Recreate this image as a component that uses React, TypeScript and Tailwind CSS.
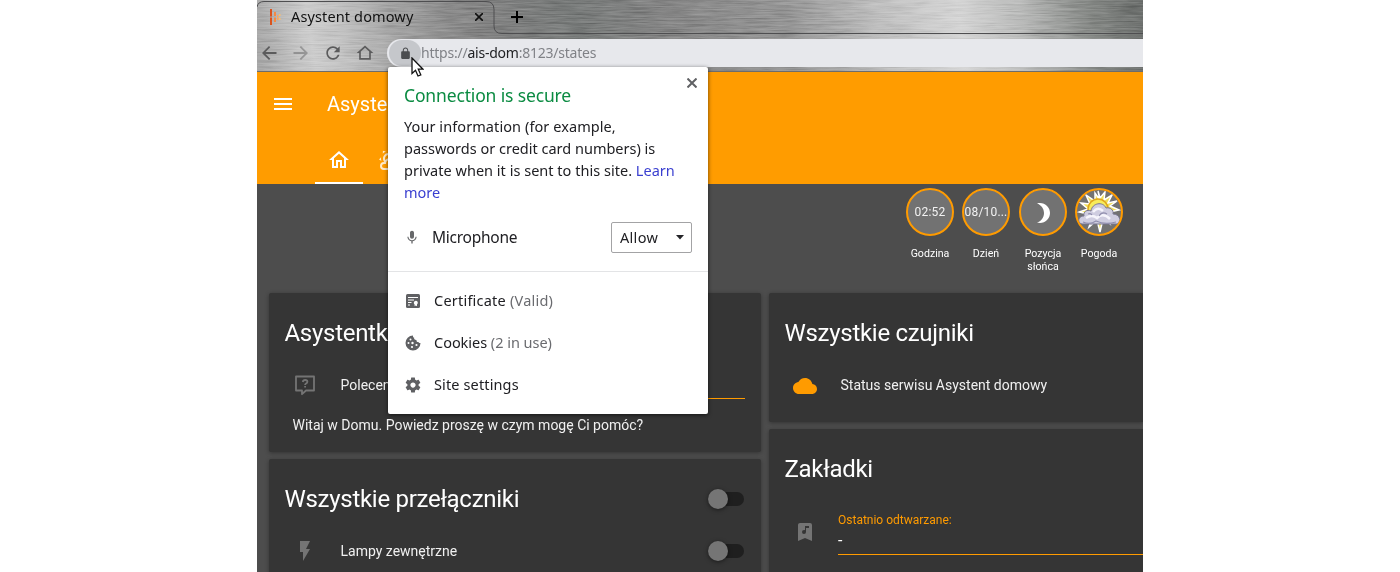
import type { ReactNode } from "react";

const ui = "font-['Noto_Sans',sans-serif]";

function Icon({ d, className }: { d: string; className: string }) {
  return (
    <svg viewBox="0 0 24 24" className={className} fill="currentColor" fillRule="evenodd">
      <path d={d} />
    </svg>
  );
}

const paths = {
  back: "M21 10.800H7.83l5.59-5.59L12 3.600l-8.400 8.400L12 20.400l1.600-1.600L7.83 13.200H21v-2.400z",
  forward: "M12 3.600l-1.600 1.600 5.770 5.600H3v2.400h13.170l-5.770 5.600 1.600 1.600 8.400-8.400z",
  reload:
    "M17.65 6.35C16.2 4.9 14.21 4 12 4c-4.42 0-7.99 3.58-7.99 8s3.57 8 7.99 8c3.73 0 6.84-2.55 7.73-6h-2.08c-.82 2.33-3.04 4-5.65 4-3.31 0-6-2.69-6-6s2.69-6 6-6c1.66 0 3.14.69 4.22 1.78L13 11h7V4l-2.35 2.35z",
  homeOutline: "M12 3L2 12h3v8h14v-8h3L12 3zm5 15H7v-7.81l5-4.5 5 4.5V18z",
  lock: "M18 8h-1V6c0-2.76-2.24-5-5-5S7 3.24 7 6v2H6c-1.1 0-2 .9-2 2v10c0 1.1.9 2 2 2h12c1.1 0 2-.9 2-2V10c0-1.1-.9-2-2-2zM8.9 8V6c0-1.71 1.39-3.1 3.1-3.1s3.1 1.39 3.1 3.1v2H8.9z",
  menu: "M3 18h18v-2H3v2zm0-5h18v-2H3v2zm0-7v2h18V6H3z",
  home: "M12 5.69l5 4.5V18h-2v-6H9v6H7v-7.81l5-4.5M12 3L2 12h3v8h6v-6h2v6h6v-8h3L12 3z",
  weather:
    "M12.74,5.47C15.1,6.5 16.35,9.03 15.92,11.46C17.19,12.56 18,14.19 18,16V16.17C18.31,16.06 18.65,16 19,16A3,3 0 0,1 22,19A3,3 0 0,1 19,22H6A4,4 0 0,1 2,18A4,4 0 0,1 6,14H6.27C5,12.45 4.6,10.24 5.5,8.26C6.72,5.5 9.97,4.24 12.74,5.47M11.93,7.3C10.16,6.5 8.09,7.31 7.31,9.07C6.85,10.09 6.93,11.22 7.41,12.13C8.5,10.83 10.16,10 12,10C12.7,10 13.38,10.12 14,10.34C13.94,9.06 13.18,7.86 11.93,7.3M13.55,3.64C13,3.4 12.45,3.23 11.88,3.12L14.37,1.82L15.27,4.71C14.76,4.29 14.19,3.93 13.55,3.64M6.09,4.44C5.6,4.79 5.17,5.19 4.8,5.63L4.91,2.82L7.87,3.5C7.25,3.71 6.65,4.03 6.09,4.44M3.04,11.3C3.11,11.9 3.24,12.47 3.43,13L1.06,11.5L3.1,9.28C3,9.93 2.97,10.61 3.04,11.3M19,18H16V16A4,4 0 0,0 12,12A4,4 0 0,0 8,16H6A2,2 0 0,0 4,18A2,2 0 0,0 6,20H19A1,1 0 0,0 20,19A1,1 0 0,0 19,18Z",
  moon: "M9 2c-1.05 0-2.05.16-3 .46 4.06 1.27 7 5.06 7 9.54 0 4.48-2.94 8.27-7 9.54.95.3 1.95.46 3 .46 5.52 0 10-4.48 10-10S14.52 2 9 2z",
  flash: "M7,2V13H10V22L17,10H13L17,2H7Z",
  cloud:
    "M19.35 10.04C18.67 6.59 15.64 4 12 4 9.11 4 6.6 5.64 5.35 8.04 2.34 8.36 0 10.91 0 14c0 3.31 2.69 6 6 6h13c2.76 0 5-2.24 5-5 0-2.64-2.05-4.78-4.65-4.96z",
  bookmark:
    "M17,3A2,2 0 0,1 19,5V21L12,18L5,21V5C5,3.89 5.9,3 7,3H17M11,14A2,2 0 0,0 13,12V8H16V6H12V10.27C11.71,10.1 11.36,10 11,10A2,2 0 0,0 9,12A2,2 0 0,0 11,14Z",
  mic: "M12 14c1.66 0 2.99-1.34 2.99-3L15 5c0-1.66-1.34-3-3-3S9 3.34 9 5v6c0 1.66 1.34 3 3 3zm5.3-3c0 3-2.54 5.1-5.3 5.1S6.7 14 6.7 11H5c0 3.41 2.72 6.23 6 6.72V21h2v-3.28c3.28-.48 6-3.3 6-6.72h-1.7z",
  gear: "M19.43 12.98c.04-.32.07-.64.07-.98s-.03-.66-.07-.98l2.11-1.65c.19-.15.24-.42.12-.64l-2-3.46c-.12-.22-.39-.3-.61-.22l-2.49 1c-.52-.4-1.08-.73-1.69-.98l-.38-2.65C14.46 2.18 14.25 2 14 2h-4c-.25 0-.46.18-.49.42l-.38 2.65c-.61.25-1.17.59-1.69.98l-2.49-1c-.23-.09-.49 0-.61.22l-2 3.46c-.13.22-.07.49.12.64l2.11 1.65c-.04.32-.07.65-.07.98s.03.66.07.98l-2.11 1.65c-.19.15-.24.42-.12.64l2 3.46c.12.22.39.3.61.22l2.49-1c.52.4 1.08.73 1.69.98l.38 2.65c.03.24.24.42.49.42h4c.25 0 .46-.18.49-.42l.38-2.65c.61-.25 1.17-.59 1.69-.98l2.49 1c.23.09.49 0 .61-.22l2-3.46c.12-.22.07-.49-.12-.64l-2.11-1.65zM12 15.5c-1.93 0-3.5-1.57-3.5-3.5s1.57-3.5 3.5-3.5 3.5 1.57 3.5 3.5-1.57 3.5-3.5 3.5z",
};

function Metal() {
  return (
    <svg className="absolute inset-0 h-full w-full" preserveAspectRatio="none">
      <defs>
        <linearGradient id="steel" gradientUnits="userSpaceOnUse" x1="0" y1="36" x2="870" y2="-104">
          <stop offset="0" stopColor="#a8a8a8" />
          <stop offset="0.06" stopColor="#cccccc" />
          <stop offset="0.1" stopColor="#c0c0c0" />
          <stop offset="0.17" stopColor="#9c9c9c" />
          <stop offset="0.25" stopColor="#828282" />
          <stop offset="0.36" stopColor="#777a79" />
          <stop offset="0.46" stopColor="#848484" />
          <stop offset="0.6" stopColor="#969696" />
          <stop offset="0.7" stopColor="#bebebe" />
          <stop offset="0.79" stopColor="#d4d4d4" />
          <stop offset="0.86" stopColor="#b8b9b8" />
          <stop offset="0.94" stopColor="#838683" />
          <stop offset="1" stopColor="#6b6e6c" />
        </linearGradient>
        <filter id="brushed" x="0" y="0" width="100%" height="100%" colorInterpolationFilters="sRGB">
          <feTurbulence type="fractalNoise" baseFrequency="0.035 0.65" numOctaves="3" seed="8" />
          <feColorMatrix type="matrix" values="1.200 0 0 0 -0.080  1.200 0 0 0 -0.080  1.200 0 0 0 -0.080  0 0 0 0 1" />
        </filter>
      </defs>
      <rect width="886" height="72" fill="url(#steel)" />
      <rect width="886" height="72" filter="url(#brushed)" opacity="0.38" className="mix-blend-soft-light" />
      <path d="M0 7Q1 1.5 7 1.5H229Q237 1.5 237 9.500V26Q237 33.500 245 33.500H886" fill="none" stroke="#4e4e50" />
      <path d="M0 71.500H886" stroke="#6c6c6c" />
    </svg>
  );
}

function Logo() {
  return (
    <svg viewBox="0 0 12 16" className="ml-3 h-4 w-3 shrink-0">
      <path d="M1 0h2v7.500H1zM1 8.500h2V16H1z" fill="#d9531e" />
      <path d="M5 3h2v4H5zM5 8.500h2V13H5z" fill="#f58a45" />
      <path d="M8 6h1.500v5H8z" fill="#fba65e" />
      <path d="M10 5h1.500v2H10zM10 9h1.500v2H10z" fill="#fcbd6f" />
    </svg>
  );
}

function Browser() {
  return (
    <div className="relative h-[72px] shrink-0">
      <Metal />
      <div className={`relative flex h-[72px] flex-col text-[15px] text-[#111] ${ui}`}>
        <div className="flex h-[34px] items-center">
          <Logo />
          <span className="ml-[10px] w-[123px] whitespace-nowrap text-[14.500px] tracking-[0.13px]">Asystent domowy</span>
          <svg viewBox="0 0 8 8" className="ml-[61px] h-2 w-2" stroke="#111" strokeWidth="1.600">
            <path d="M0 0l8 8M8 0L0 8" />
          </svg>
          <svg viewBox="0 0 12 12" className="ml-7 h-3 w-3" stroke="#000" strokeWidth="2">
            <path d="M6 0v12M0 6h12" />
          </svg>
        </div>
        <div className="flex h-[38px] pt-[5px] text-[#5b5b5c]">
          <div className="flex h-[27px] w-[130px] items-center gap-[12px] pl-[2px]">
            <Icon d={paths.back} className="h-5 w-5" />
            <Icon d={paths.forward} className="h-5 w-5 opacity-45" />
            <Icon d={paths.reload} className="h-5 w-5" />
            <Icon d={paths.homeOutline} className="h-5 w-5" />
          </div>
          <div className="flex h-7 flex-1 items-center rounded-l-full bg-[#e7e8ec] pl-[2px]">
            <div className="flex h-[26px] w-8 items-center justify-center rounded-full bg-[#c5c7cb] pr-0">
              <Icon d={paths.lock} className="h-[13px] w-[13px] text-[#4b4d50]" />
            </div>
            <span className="-mt-[2px] whitespace-nowrap text-[14px] tracking-[-0.230px] text-[#808287]">
              https://<span className="text-[#202124]">ais-dom</span>:8123/states
            </span>
          </div>
        </div>
      </div>
    </div>
  );
}

function Sun() {
  return (
    <svg viewBox="0 0 44 44" className="h-11 w-11 shrink-0">
      <path
        d="M21 1l2 7 5-6-1 8 8-5-4 8 9-2-7 5 9 4-9 2 8 7-10-2 2 7-7-5-3 13-3-12-8 7 3-9-12 3 8-7-9-2 9-3-7-6 9 1-4-9 9 6 0-8 5 7z"
        fill="#f0df5a"
        stroke="#fff"
        strokeWidth="1.500"
      />
      <circle cx="21" cy="19" r="10" fill="#f8ec5a" stroke="#e0a51c" strokeWidth="1.500" />
      <path
        d="M5 34c-5-1-4-8 2-8-1-4 3-7 7-5 1-8 12-10 15-3 4-1 8 2 7 6 7 0 9 8 4 10z"
        fill="#cfcde0"
        stroke="#77758f"
      />
      <path d="M9 28q6-4 11 0q6-6 13 1M16 22q5-6 10-1" fill="none" stroke="#f6f5fc" strokeWidth="2.500" />
      <path d="M6 32q7 3 13-1q9 4 20 1M22 26q3-5 8-2M11 24q3-1 4 1" fill="none" stroke="#918fae" strokeWidth="1.200" />
    </svg>
  );
}

function Badge({ label, width, children }: { label: string; width: string; children: ReactNode }) {
  return (
    <div className={`flex flex-col items-center ${width}`}>
      <div className="flex h-12 w-12 items-center justify-center overflow-hidden rounded-full border-[2px] border-[#ff9b00] bg-[#727272] text-[12px] tracking-[0.180px] text-[#f2f2f2]">
        {children}
      </div>
      <div className="mt-[11px] w-12 text-center text-[10.600px] leading-[13px] text-white">{label}</div>
    </div>
  );
}

function Card({ title, className, action, children }: { title: string; className: string; action?: ReactNode; children: ReactNode }) {
  return (
    <section className={`flex flex-col rounded-[2px] bg-[#353535] shadow-[0_1px_4px_rgba(0,0,0,0.35)] ${className}`}>
      <div className="flex h-20 shrink-0 items-center justify-between pr-[17px] pl-[15.500px] text-[24px] tracking-[-0.288px] text-white">
        {title}
        {action}
      </div>
      {children}
    </section>
  );
}

function Toggle() {
  return (
    <span className="flex h-5 w-9 items-center">
      <span className="flex h-[14px] w-9 items-center rounded-full bg-[#1f1f1f]">
        <span className="h-5 w-5 rounded-full bg-[#757575] shadow-[0_1px_4px_rgba(0,0,0,0.5)]" />
      </span>
    </span>
  );
}

function Row({ icon, label, children }: { icon: ReactNode; label: string; children?: ReactNode }) {
  return (
    <div className="flex h-6 items-center pr-[17px] pl-6 text-[14px] text-[#f0f0f0]">
      <span className="w-6">{icon}</span>
      <span className="ml-[23.500px] flex-1 whitespace-nowrap">{label}</span>
      {children}
    </div>
  );
}

function Popup() {
  return (
    <div className={`absolute top-[67px] left-[131px] flex h-[347px] w-[320px] flex-col rounded-[2px] bg-white text-[15px] text-[#202024] shadow-[0_1px_4px_rgba(0,0,0,0.6)] ${ui}`}>
      <div className="flex h-[205px] shrink-0 flex-col border-b border-[#e3e4e6] pr-4 pl-4">
        <div className="flex h-[48px] justify-between whitespace-nowrap">
          <h1 className="mt-4 text-[17.500px] leading-[24px] tracking-[-0.150px] text-[#0b8b42]">Connection is secure</h1>
          <svg viewBox="0 0 10 10" className="mt-[11px] -mr-[5px] h-[10px] w-[10px]" stroke="#606164" strokeWidth="2">
            <path d="M0.500 0.500l9 9M9.500 0.500l-9 9" />
          </svg>
        </div>
        <div className="flex flex-col items-start whitespace-nowrap text-[14.500px] leading-[22px]">
          <span className="tracking-[0.080px]">Your information (for example,</span>
          <span>passwords or credit card numbers) is</span>
          <span className="tracking-[0.020px]">private when it is sent to this site. <span className="text-[#3a3fd0]">Learn</span></span>
          <span className="text-[#3a3fd0]">more</span>
        </div>
        <div className="mt-[19px] flex h-[31px] items-center">
          <Icon d={paths.mic} className="h-[17px] w-4 text-[#67686a]" />
          <span className="ml-3 flex-1 text-[15.500px] tracking-[-0.250px]">Microphone</span>
          <div className="flex h-[31px] w-[81px] items-center justify-between rounded-[2px] border border-[#a3a3a5] pr-[7px] pl-2 text-[14.500px] tracking-[0.300px]">
            Allow
            <svg viewBox="0 0 8 5" className="h-[5px] w-2" fill="#242428">
              <path d="M0 0h8L4 4.500z" />
            </svg>
          </div>
        </div>
      </div>
      <div className="flex flex-col pt-2 text-[14.500px]">
        <PopupRow
          icon={
            <svg viewBox="0 0 14 14" className="h-[14px] w-[14px]">
              <rect width="14" height="14" rx="1.500" fill="#5f6063" />
              <path d="M2 3.500h10M2 6h6M2 8.500h3.500M2 11h2" stroke="#fff" strokeWidth="1" />
              <path d="M9.700 6.800a2 2 0 011.300 3.600v1.900l-1.200-.8-1.200.8v-1.900a2 2 0 011.100-3.600z" fill="#fff" />
            </svg>
          }
          label="Certificate"
          note="(Valid)"
          tracking="tracking-[0.220px]"
        />
        <PopupRow
          icon={
            <svg viewBox="0 0 16 16" className="h-4 w-4">
              <path d="M8 .5a7.500 7.500 0 107.500 7.500c-1 .3-1.800-.2-2-1.100-1.400.2-2.300-.7-2-2C9.700 5 8.700 4 9.200 2.700 8.200 2.500 7.800 1.500 8 .5z" fill="#5f6063" />
              <g fill="#fff">
                <circle cx="5.500" cy="4.500" r="1" />
                <circle cx="3.500" cy="8" r="1" />
                <circle cx="7.500" cy="8" r="1.200" />
                <circle cx="7" cy="12" r="1.100" />
                <circle cx="11.500" cy="10" r="1.100" />
              </g>
            </svg>
          }
          label="Cookies"
          note="(2 in use)"
          tracking="tracking-[-0.030px]"
        />
        <PopupRow
          icon={<Icon d={paths.gear} className="h-[18px] w-[18px] text-[#5f6063]" />}
          label="Site settings"
          tracking="tracking-[0.130px]"
        />
      </div>
    </div>
  );
}

function PopupRow({ icon, label, note, tracking }: { icon: ReactNode; label: string; note?: string; tracking: string }) {
  return (
    <div className="flex h-[42px] items-center pl-4">
      <span className="flex w-[18px] justify-center">{icon}</span>
      <span className={`ml-3 whitespace-pre ${tracking}`}>
        {label} <span className="text-[#6a6b6f]">{note}</span>
      </span>
    </div>
  );
}

export default function App() {
  return (
    <div className="h-[572px] overflow-hidden bg-white font-[Roboto,sans-serif]">
      <main className="relative mx-auto flex h-[572px] w-[886px] flex-col overflow-hidden bg-[#4d4d4d]">
        <Browser />
        <header className="h-[112px] shrink-0 bg-[#ff9c00] text-white">
          <div className="flex h-16 items-center pl-[14px] text-[20px]">
            <Icon d={paths.menu} className="h-6 w-6" />
            <span className="ml-8">Asyste</span>
          </div>
          <nav className="flex h-12 pl-[58px]">
            <span className="flex w-12 items-center justify-center border-b-2 border-white pt-[2px]">
              <Icon d={paths.home} className="h-6 w-6" />
            </span>
            <span className="flex w-12 items-center justify-center pl-1.5 opacity-80">
              <Icon d={paths.weather} className="h-6 w-6" />
            </span>
          </nav>
        </header>
        <div className="flex h-[109px] shrink-0 justify-end pt-1 pr-[17px]">
          <Badge label="Godzina" width="w-14">02:52</Badge>
          <Badge label="Dzień" width="w-14">08/10...</Badge>
          <Badge label="Pozycja słońca" width="w-[58px]"><Icon d={paths.moon} className="mt-[2px] h-6 w-6 shrink-0 text-white" /></Badge>
          <Badge label="Pogoda" width="w-[54px]"><Sun /></Badge>
        </div>
        <div className="flex gap-2 pl-3">
          <div className="flex w-[492px] shrink-0 flex-col gap-[7px]">
            <Card title="Asystentk" className="h-[159px]">
              <div className="flex h-[26px] shrink-0 items-start">
                <Row
                  icon={
                    <svg viewBox="0 0 24 24" className="h-6 w-6" fill="none" stroke="#747474" strokeWidth="1.800">
                      <path d="M3 3.500h18v14h-8l-4 3.700v-3.700H3z" strokeLinejoin="round" />
                      <path d="M9.800 9q.3-2 2.400-2 2.200 0 2.200 1.800 0 1-1.300 1.700-1 .6-1 1.500M12.100 13v1.500" />
                    </svg>
                  }
                  label="Polecen"
                />
                <div className="mr-4 h-[26px] flex-1 border-b border-[#ff9b00]" />
              </div>
              <p className="mt-[17px] ml-[23.500px] text-[14px] leading-[18px] text-[#f0f0f0]">
                Witaj w Domu. Powiedz proszę w czym mogę Ci pomóc?
              </p>
            </Card>
            <Card title="Wszystkie przełączniki" className="h-[180px]" action={<Toggle />}>
              <Row icon={<Icon d={paths.flash} className="h-6 w-6 text-[#747474]" />} label="Lampy zewnętrzne">
                <Toggle />
              </Row>
            </Card>
          </div>
          <div className="flex flex-1 flex-col gap-[7px]">
            <Card title="Wszystkie czujniki" className="h-[129px] rounded-r-none">
              <Row icon={<Icon d={paths.cloud} className="mt-px h-6 w-6 text-[#ff9b00]" />} label="Status serwisu Asystent domowy" />
            </Card>
            <Card title="Zakładki" className="h-[180px] rounded-r-none">
              <div className="flex items-start pl-6">
                <Icon d={paths.bookmark} className="mt-[11px] h-6 w-6 text-[#747474]" />
                <div className="ml-[21px] flex h-[46px] flex-1 flex-col border-b border-[#ff9b00] text-[12px] text-[#ff9b00]">
                  <span className="mt-[3px] leading-[16px]">Ostatnio odtwarzane:</span>
                  <span className="mt-px text-[16px] leading-[24px] text-white">-</span>
                </div>
              </div>
            </Card>
          </div>
        </div>
        <Popup />
        <svg viewBox="0 0 13 20" className="absolute top-[57px] left-[154px] h-5 w-[13px]">
          <path d="M1 1v15.500l3.500-3.200 2.500 5.700 2.800-1.200-2.500-5.600H12z" fill="#fff" stroke="#111" strokeWidth="1.300" />
        </svg>
      </main>
    </div>
  );
}
